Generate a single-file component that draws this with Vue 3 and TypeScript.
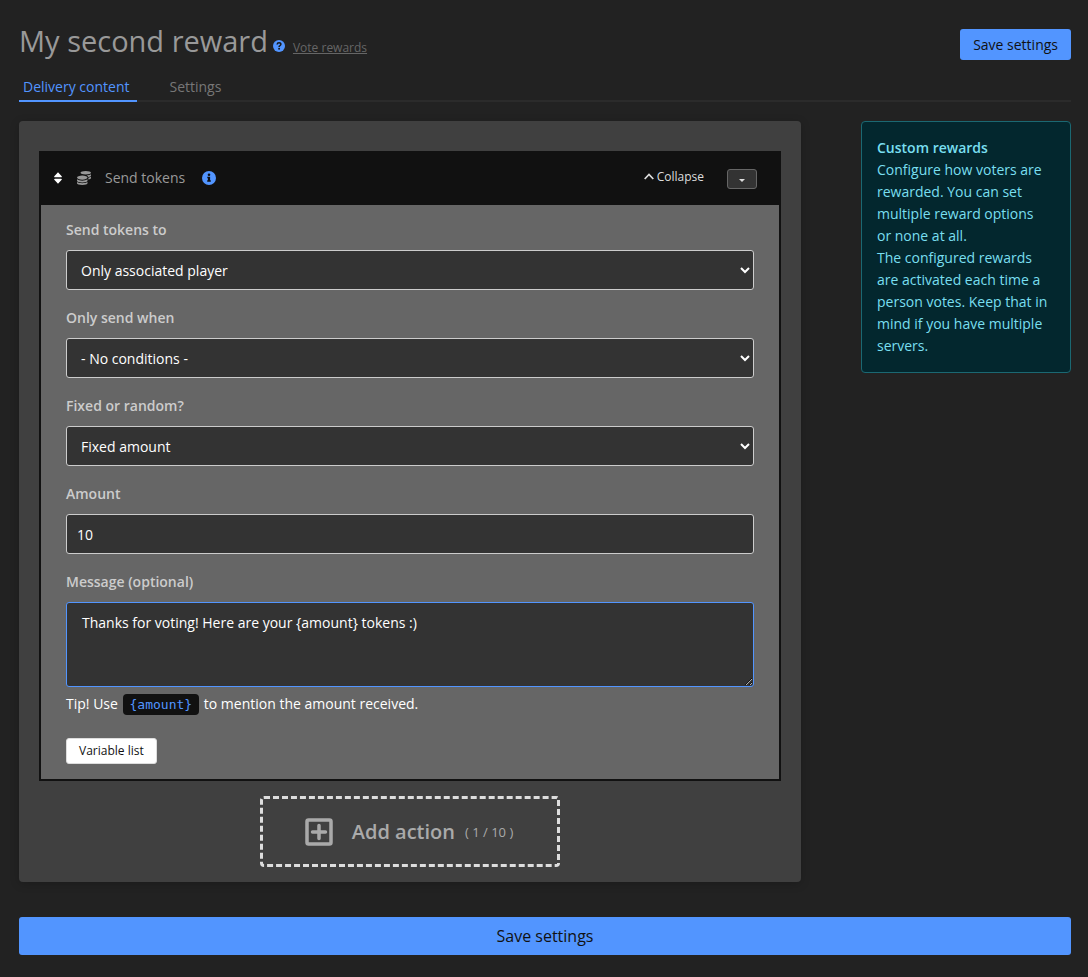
<script setup lang="ts">
import { ref } from 'vue'

interface SelectField {
  id: string
  label: string
  value: string
  options: string[]
}

const tabs = ['Delivery content', 'Settings']
const activeTab = ref(tabs[0])

const fields = ref<SelectField[]>([
  { id: 'send-to', label: 'Send tokens to', value: 'Only associated player', options: ['Only associated player'] },
  { id: 'condition', label: 'Only send when', value: '- No conditions -', options: ['- No conditions -'] },
  { id: 'mode', label: 'Fixed or random?', value: 'Fixed amount', options: ['Fixed amount'] },
])

const amount = ref('10')
const message = ref('Thanks for voting! Here are your {amount} tokens :)')
const variable = '{amount}'
</script>

<template>
  <div class="page">
    <header class="head">
      <div class="heading">
        <h1>My second reward</h1>
        <svg class="help" viewBox="0 0 12 12" aria-hidden="true">
          <circle cx="6" cy="6" r="6" fill="#5295ff" />
          <path d="M4.1 4.5Q4.3 2.8 6 2.8Q7.9 2.8 7.9 4.3Q7.9 5.1 7 5.6Q6.1 6 6.1 6.9" fill="none" stroke="#161616" stroke-width="1.5" />
          <circle cx="6.1" cy="8.8" r="0.95" fill="#161616" />
        </svg>
        <a href="#" class="help-link">Vote rewards</a>
      </div>
      <button type="button" class="save">Save settings</button>
    </header>

    <nav class="tabs">
      <button
        v-for="tab in tabs"
        :key="tab"
        type="button"
        :class="['tab', { active: tab === activeTab }]"
        @click="activeTab = tab"
      >{{ tab }}</button>
    </nav>

    <div class="columns">
      <main class="card">
        <section class="action">
          <div class="action-head">
            <svg class="sort" viewBox="0 0 8 12" aria-hidden="true">
              <path d="M4 0.3L7.7 4.2Q8.2 5.2 7 5.2H1Q-0.2 5.2 0.3 4.2ZM4 11.7L7.7 7.8Q8.2 6.8 7 6.8H1Q-0.2 6.8 0.3 7.8Z" fill="#fff" />
            </svg>
            <svg class="coins" viewBox="0 0 512 512" aria-hidden="true">
              <path fill="#999" d="M0 405.3V448c0 35.3 86 64 192 64s192-28.7 192-64v-42.7C342.7 434.4 267.2 448 192 448S41.3 434.4 0 405.3zM320 128c106 0 192-28.7 192-64S426 0 320 0 128 28.7 128 64s86 64 192 64zM0 300.4V352c0 35.3 86 64 192 64s192-28.7 192-64v-51.6c-41.3 34-116.9 51.6-192 51.6S41.3 334.4 0 300.4zm416 11c57.3-11.1 96-31.7 96-55.4v-42.7c-23.2 16.4-57.3 27.6-96 34.5v63.6zM192 160C86 160 0 195.8 0 240s86 80 192 80 192-35.8 192-80-86-80-192-80zm219.3 56.3c60-10.8 100.7-32 100.7-56.3v-42.7c-35.5 25.1-96.5 38.6-160.7 41.8 29.5 14.3 51.2 33.5 60 57.2z" />
            </svg>
            <h2>Send tokens</h2>
            <svg class="info" viewBox="0 0 14 14" aria-hidden="true">
              <circle cx="7" cy="7" r="7" fill="#5295ff" />
              <circle cx="7" cy="3.7" r="1.3" fill="#111" />
              <path d="M5.3 5.7H8.1V9.3H8.8V10.8H5.2V9.3H5.9V7.2H5.3Z" fill="#111" />
            </svg>
            <button type="button" class="collapse">
              <svg viewBox="0 0 10 7" aria-hidden="true">
                <path d="M0.7 6L5 1.5L9.3 6" fill="none" stroke="currentColor" stroke-width="1.7" />
              </svg>
              Collapse
            </button>
            <button type="button" class="menu" aria-label="Action menu">
              <svg viewBox="0 0 6 3" aria-hidden="true"><path d="M0 0H6L3 3Z" fill="#ddd" /></svg>
            </button>
          </div>

          <form class="action-body" @submit.prevent>
            <div v-for="field in fields" :key="field.id" class="field">
              <label :for="field.id">{{ field.label }}</label>
              <select :id="field.id" v-model="field.value">
                <option v-for="option in field.options" :key="option">{{ option }}</option>
              </select>
            </div>
            <div class="field">
              <label for="amount">Amount</label>
              <input id="amount" v-model="amount" type="text" inputmode="numeric">
            </div>
            <div class="field message">
              <label for="message">Message (optional)</label>
              <textarea id="message" v-model="message" spellcheck="false"></textarea>
            </div>
            <p class="tip">Tip! Use <code>{{ variable }}</code> to mention the amount received.</p>
            <button type="button" class="variables">Variable list</button>
          </form>
        </section>

        <button type="button" class="add">
          <svg viewBox="0 0 28 28" aria-hidden="true">
            <rect x="2" y="2" width="24" height="24" rx="1.5" fill="none" stroke="#aaa" stroke-width="3.5" />
            <path d="M14 7.5V20.5M7.5 14H20.5" fill="none" stroke="#aaa" stroke-width="3.5" stroke-linecap="round" />
          </svg>
          <span class="add-label">Add action</span>
          <span class="add-count">( 1 / 10 )</span>
        </button>
      </main>

      <aside class="note">
        <strong>Custom rewards</strong>
        <p>Configure how voters are rewarded. You can set multiple reward options or none at all.</p>
        <p>The configured rewards are activated each time a person votes. Keep that in mind if you have multiple servers.</p>
      </aside>
    </div>

    <button type="button" class="save wide">Save settings</button>
  </div>
</template>

<style>
body {
  background: #222;
}
</style>

<style scoped>
.page,
.page * {
  box-sizing: border-box;
}

.page {
  padding: 22px 17px 22px 19px;
  font: 14px/22px "Open Sans", "Noto Sans", sans-serif;
  color: #fff;
}

button,
select,
input,
textarea {
  margin: 0;
  font-family: inherit;
}

h1,
h2,
p {
  margin: 0;
  font-weight: 400;
}

.head {
  display: flex;
  justify-content: space-between;
  align-items: flex-start;
  height: 48px;
}

.heading {
  display: flex;
  align-items: baseline;
}

h1 {
  font-size: 29px;
  line-height: 38px;
  color: #999;
}

.help {
  align-self: flex-end;
  width: 12px;
  height: 12px;
  margin: 0 8px 8px 5px;
}

.help-link {
  font-size: 12px;
  color: #666;
}

.save {
  height: 31px;
  margin-top: 7px;
  padding: 0 13px;
  border: 0;
  border-radius: 3px;
  background: #5295ff;
  color: #111;
  font-size: 14px;
}

.save.wide {
  display: block;
  width: 100%;
  height: 38px;
  margin-top: 35px;
  font-size: 16px;
}

.tabs {
  display: flex;
  gap: 28px;
  height: 32px;
  border-bottom: 2px solid #2b2b2b;
}

.tab {
  height: 32px;
  padding: 2px 8px 0 4px;
  border: 0;
  border-bottom: 2px solid transparent;
  background: none;
  color: #777;
  font-size: 14px;
}

.tab.active {
  border-color: #5295ff;
  color: #5295ff;
}

.columns {
  display: grid;
  grid-template-columns: minmax(0, 1fr) 210px;
  gap: 60px;
  align-items: start;
  margin-top: 19px;
}

.card {
  padding: 30px 20px 15px;
  border-radius: 4px;
  background: #404040;
  box-shadow: 0 2px 10px rgba(0, 0, 0, 0.2);
}

.action {
  border: 2px solid #111;
  border-top: 0;
  background: #666;
}

.action-head {
  display: flex;
  align-items: center;
  height: 54px;
  padding: 0 22px 0 13px;
  background: #111;
}

.sort {
  width: 8px;
  height: 12px;
}

.coins {
  width: 14px;
  height: 14px;
  margin: 0 14px 0 15px;
}

h2 {
  font-size: 14px;
  color: #999;
}

.info {
  width: 14px;
  height: 14px;
  margin-left: 17px;
}

.collapse {
  display: flex;
  align-items: center;
  gap: 3px;
  margin-left: auto;
  padding: 0 0 4px;
  border: 0;
  background: none;
  color: #ddd;
  font-size: 12px;
}

.collapse svg {
  width: 10px;
  height: 7px;
}

.menu {
  display: flex;
  align-items: center;
  justify-content: center;
  width: 30px;
  height: 20px;
  margin: 2px 0 0 23px;
  padding: 2px 0 0;
  border: 1px solid #666;
  border-radius: 3px;
  background: #333;
}

.menu svg {
  width: 6px;
  height: 3px;
}

.action-body {
  padding: 14px 25px 15px;
}

.field {
  margin-bottom: 17px;
}

label {
  display: block;
  margin-bottom: 9px;
  font-weight: 600;
  color: #ccc;
}

select,
input,
textarea {
  display: block;
  width: 100%;
  height: 40px;
  padding: 0 10px;
  border: 1px solid #ccc;
  border-radius: 3px;
  outline: 0;
  background: #333;
  color: #fff;
  font-size: 14px;
}

select {
  padding: 0 0 0 10px;
}

textarea {
  height: 85px;
  padding: 10px 15px;
  border-color: #5295ff;
  line-height: 20px;
  resize: vertical;
}

.field.message {
  margin-bottom: 6px;
}

code {
  display: inline-block;
  margin: 0 1px;
  padding: 0 7px;
  border-radius: 4px;
  background: #111;
  color: #5295ff;
  font: 13px/21px "DejaVu Sans Mono", monospace;
}

.variables {
  display: block;
  height: 26px;
  margin-top: 23px;
  padding: 0 12px 2px;
  border: 1px solid #ddd;
  border-radius: 3px;
  background: #fff;
  color: #111;
  font-size: 12px;
}

.add {
  display: flex;
  align-items: center;
  justify-content: center;
  width: 300px;
  height: 71px;
  margin: 15px auto 0;
  padding: 0 2px 0 0;
  border: 3px dashed #ddd;
  border-radius: 4px;
  background: none;
  color: #aaa;
}

.add svg {
  width: 28px;
  height: 28px;
}

.add-label {
  margin: 0 10px 0 19px;
  font-size: 20px;
  font-weight: 600;
}

.add-count {
  font-size: 13px;
}

.note {
  padding: 15px 20px 15px 15px;
  border: 1px solid #1b6872;
  border-radius: 4px;
  background: #03272e;
  color: #79dff0;
}

.note strong {
  display: block;
  font-weight: 600;
}
</style>
